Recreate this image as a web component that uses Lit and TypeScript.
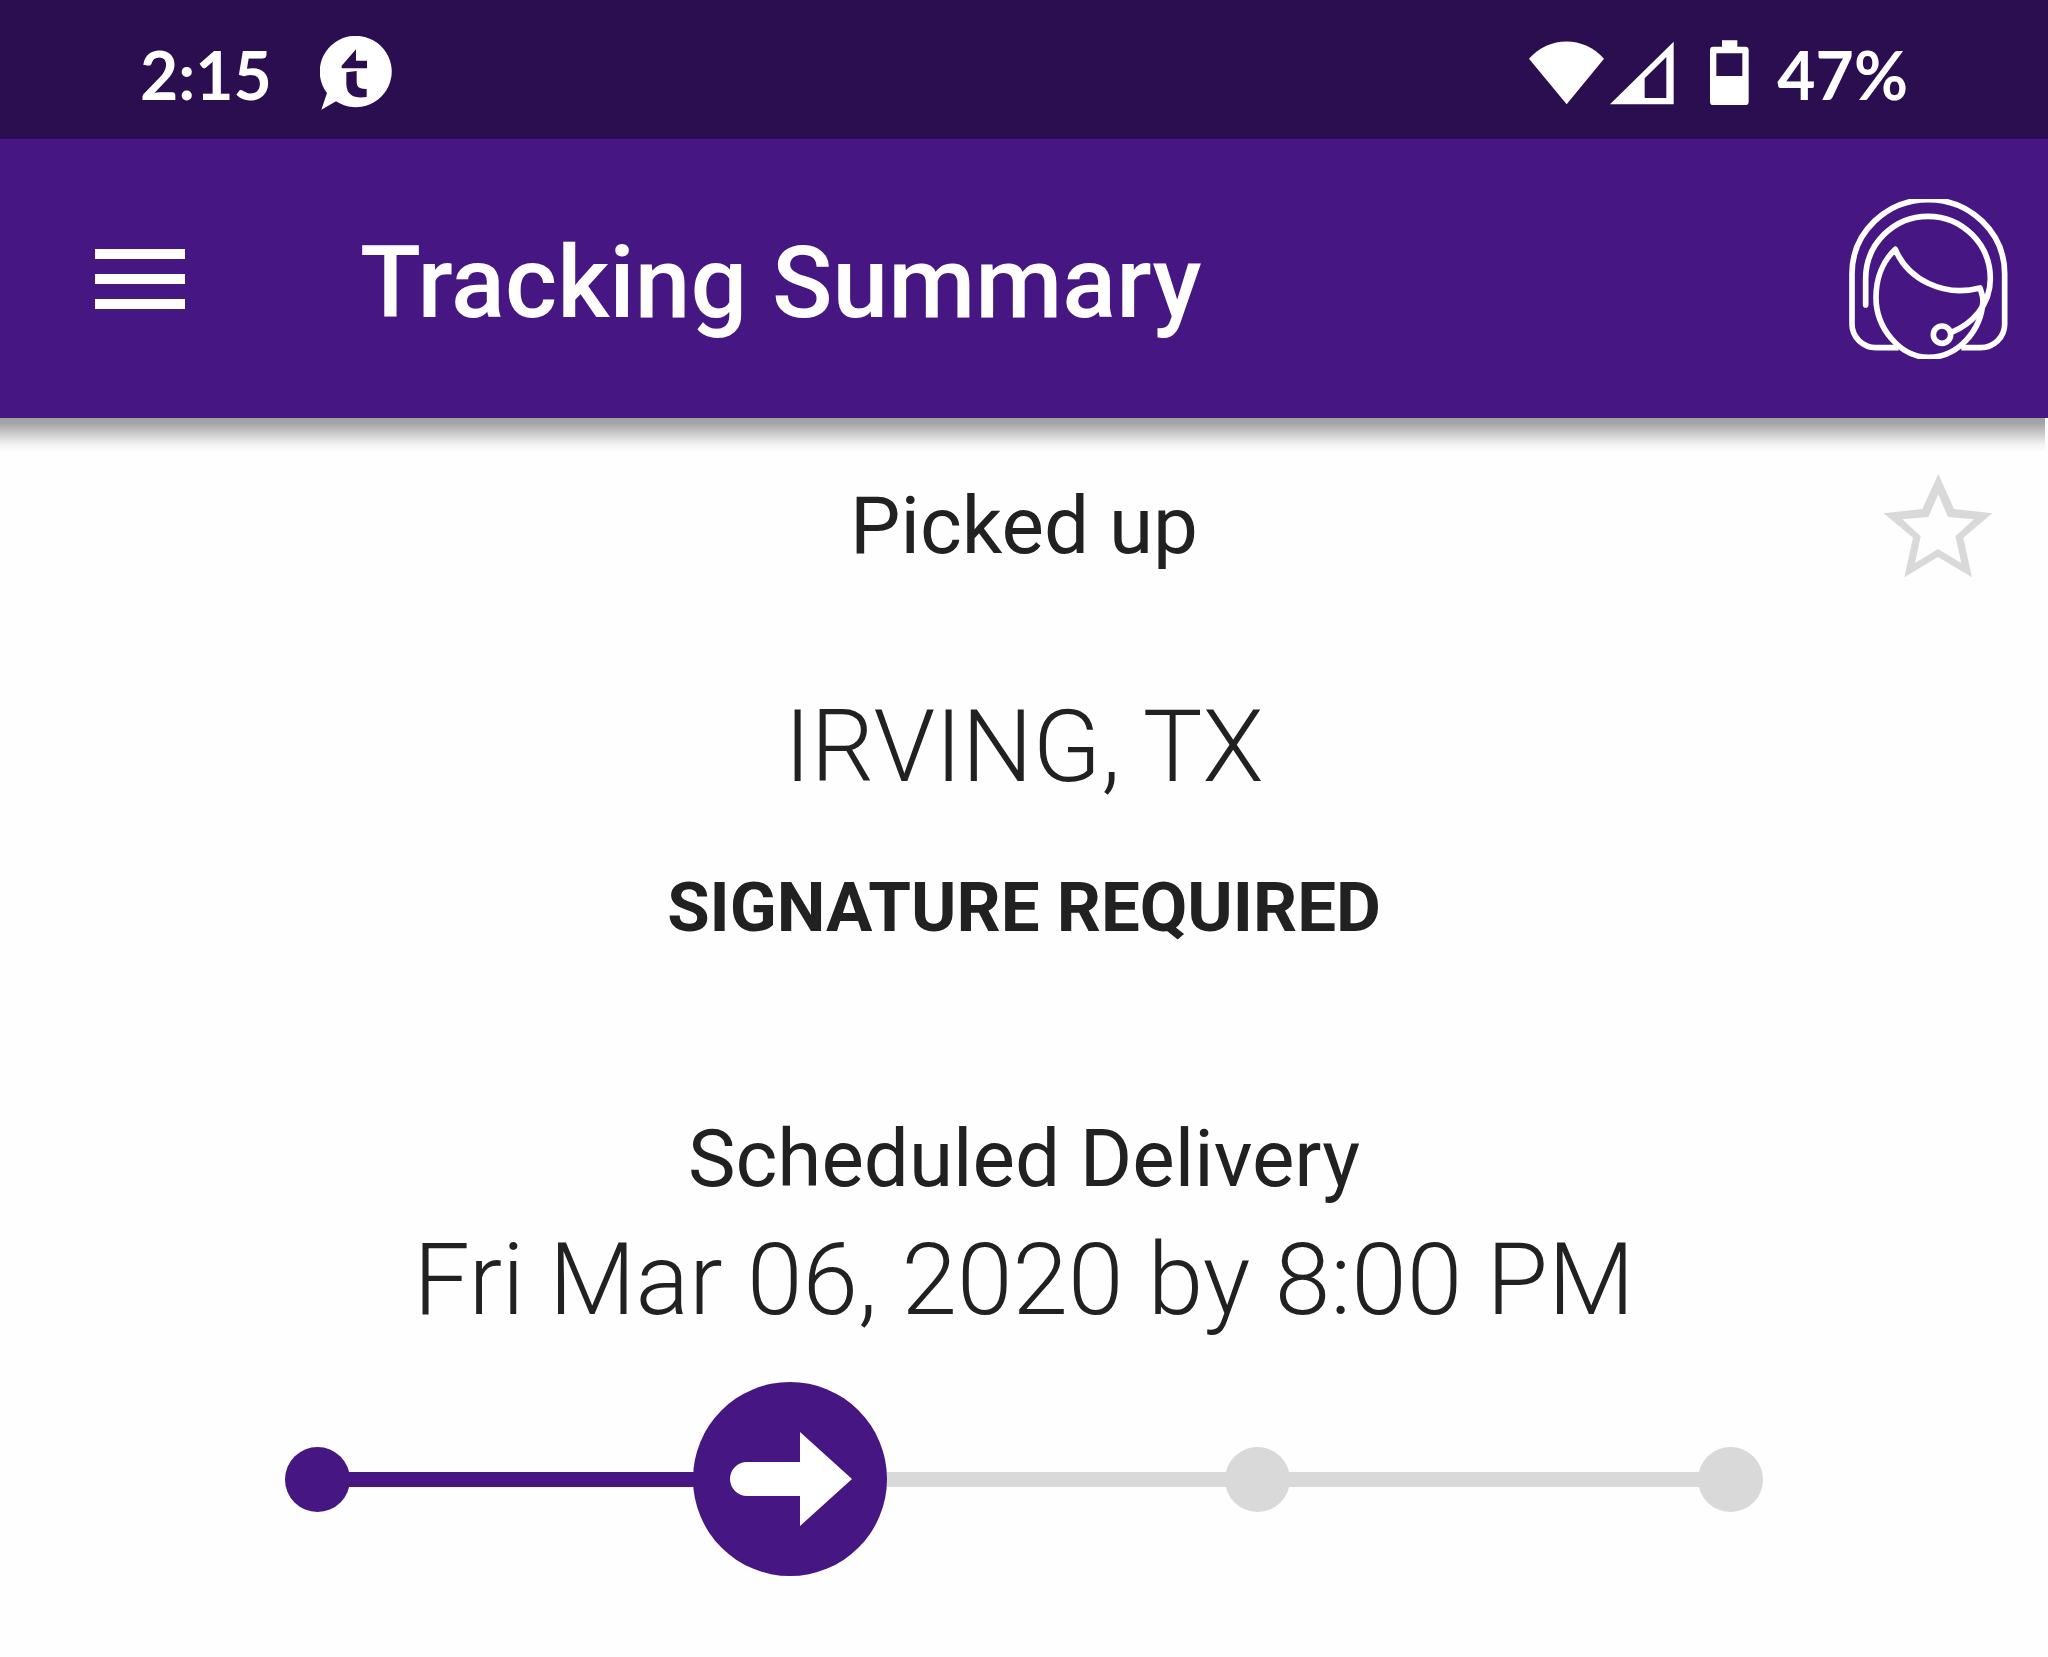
import { LitElement, html, css, svg } from "lit";
import { customElement, property } from "lit/decorators.js";

@customElement("status-bar")
class StatusBar extends LitElement {
  static styles = css`
    :host {
      display: flex;
      align-items: center;
      justify-content: space-between;
      box-sizing: border-box;
      height: 139px;
      padding: 6px 140px 0 140px;
      background: #2b0e4f;
      color: #fff;
      font: 700 66px/80px Lato, "Open Sans", sans-serif;
    }
    svg {
      display: block;
      fill: #fff;
    }
    .group {
      display: flex;
      align-items: center;
    }
    .left {
      gap: 48px;
    }
    .battery {
      margin: 0 28px 0 36px;
    }
    .signal {
      margin-left: 6px;
    }
    .text {
      padding-top: 4px;
    }
  `;

  render() {
    return html`
      <div class="group left">
        <span class="text">2:15</span>
        <svg width="72" height="74" viewBox="657 107 216 222" aria-hidden="true">
          <path
            fill-rule="evenodd"
            d="M705 303 L661 328 L678 278 A108 107 0 1 1 705 303 Z
               M765 147 L722 196 V204 H798 V181 H765 Z
               M736 216 L767 212 V245 Q767 264 785 265 L797 266 V290 Q765 294 752 285 Q736 274 736 250 Z"
          />
        </svg>
      </div>
      <div class="group">
        <svg width="75" height="64" viewBox="92 120 225 192" aria-hidden="true">
          <path d="M92 173 C152 104 257 104 317 173 L205 310 Z" />
        </svg>
        <svg class="signal" width="64" height="64" viewBox="335 120 192 192" aria-hidden="true">
          <path fill-rule="evenodd" d="M335 310 L526 122 V310 Z M439 232 V291 H504 V168 Z" />
        </svg>
        <svg class="battery" width="39" height="66" viewBox="632 120 117 198" aria-hidden="true">
          <path
            fill-rule="evenodd"
            d="M668 121 H714 V140 H738 Q748 140 748 150 V305 Q748 315 738 315 H642 Q632 315 632 305 V150 Q632 140 642 140 H668 Z
               M651 160 V228 H729 V160 Z"
          />
        </svg>
        <span class="text">47%</span>
      </div>
    `;
  }
}

@customElement("app-bar")
class AppBar extends LitElement {
  @property() heading = "";

  static styles = css`
    :host {
      position: relative;
      display: flex;
      align-items: center;
      box-sizing: border-box;
      height: 279px;
      padding: 0 40px 0 80px;
      background: #461682;
      color: #fff;
      text-align: left;
    }
    :host::after {
      content: "";
      position: absolute;
      top: 100%;
      left: 0;
      right: 3px;
      height: 35px;
      background: linear-gradient(#a0a0a0, #a4a4a4 15%, #d2d2d2 50%, #f4f4f4 78%, #fff);
    }
    button {
      display: block;
      padding: 0;
      border: 0;
      background: none;
      color: inherit;
    }
    svg {
      display: block;
    }
    h1 {
      flex: 1;
      margin: 0 0 0 160px;
      padding-top: 8px;
      font: 500 100px/116px Roboto, sans-serif;
    }
  `;

  render() {
    return html`
      <button aria-label="Menu">
        <svg width="120" height="120" viewBox="0 0 24 24" fill="currentColor">
          <path d="M3 18h18v-2H3v2zm0-5h18v-2H3v2zm0-7v2h18V6H3z" />
        </svg>
      </button>
      <h1>${this.heading}</h1>
      <button aria-label="Support">
        <svg
          width="160"
          height="160"
          viewBox="84 86 480 480"
          fill="none"
          stroke="currentColor"
          stroke-width="17"
          stroke-linejoin="round"
        >
          <path d="M236 532 H168 C128 532 96 500 96 462 V310 C96 186 200 88 325 88 C450 88 554 186 554 310 V462 C554 500 522 532 482 532 H424" />
          <path
            stroke-linecap="round"
            d="M137 404 V325 A187 187 0 0 1 511 325 C511 405 455 462 394 486"
          />
          <circle cx="366" cy="493" r="26" />
          <path d="M226 237 C262 325 368 382 480 353 C484 365 489 375 489 392 C484 480 415 561 326 561 C238 561 168 470 168 382 C168 322 190 270 226 237 Z" />
        </svg>
      </button>
    `;
  }
}

type Step = { state: "done" | "current" | "pending"; span: number };

@customElement("progress-track")
class ProgressTrack extends LitElement {
  // span is the relative length of the line that leads to the step
  private steps: Step[] = [
    { state: "done", span: 0 },
    { state: "current", span: 344 },
    { state: "pending", span: 338 },
    { state: "pending", span: 408 },
  ];

  static styles = css`
    :host {
      display: block;
    }
    .track {
      display: flex;
      align-items: center;
      margin: 0;
      padding: 0;
      list-style: none;
    }
    .step {
      display: flex;
      align-items: center;
      color: #d9d9d9;
    }
    .done,
    .current {
      color: #461682;
    }
    .line {
      flex: 1;
      height: 15px;
      margin: 0 -2px;
      background: currentColor;
    }
    .dot {
      position: relative;
      z-index: 1;
      width: 65px;
      height: 65px;
      border-radius: 50%;
      background: currentColor;
    }
    .current .dot {
      width: 194px;
      height: 194px;
    }
    svg {
      display: block;
      fill: #fff;
    }
  `;

  render() {
    return html`
      <ol class="track">
        ${this.steps.map(
          (s) => html`
            <li class="step ${s.state}" style="flex: ${s.span} 0 auto">
              ${s.span ? html`<span class="line"></span>` : ""}
              <span class="dot">
                ${s.state === "current"
                  ? html`<svg width="194" height="194" viewBox="0 0 194 194" aria-hidden="true">
                      ${svg`<path d="M54 80 H107 V50 L159 97 L107 144 V114 H54 A17 17 0 0 1 54 80 Z" />`}
                    </svg>`
                  : ""}
              </span>
            </li>
          `
        )}
      </ol>
    `;
  }
}

@customElement("app-root")
class AppRoot extends LitElement {
  static styles = css`
    :host {
      display: block;
      min-height: 100vh;
      background: #fefefe;
      color: #212121;
      font-family: Roboto, sans-serif;
      text-align: center;
    }
    .summary {
      padding: 55px 55px 80px;
    }
    .top {
      display: grid;
      grid-template-columns: 1fr auto 1fr;
      align-items: center;
    }
    h2,
    p {
      margin: 0;
    }
    .label {
      grid-column: 2;
      font: 400 80px/96px Roboto, sans-serif;
    }
    .value {
      font: 300 100px/116px Roboto, sans-serif;
    }
    .place {
      margin-top: 110px;
    }
    .notice {
      margin-top: 62px;
      font: 700 69px/82px Roboto, sans-serif;
    }
    .delivery {
      margin-top: 162px;
    }
    .date {
      margin-top: 15px;
    }
    .star {
      justify-self: end;
      padding: 0;
      border: 0;
      background: none;
    }
    .star svg {
      display: block;
      fill: #d9d9d9;
    }
    .progress {
      margin: 44px 230px 0;
    }
  `;

  render() {
    return html`
      <status-bar></status-bar>
      <app-bar heading="Tracking Summary"></app-bar>
      <main class="summary">
        <div class="top">
          <h2 class="label">Picked up</h2>
          <button class="star" aria-label="Add to favorites">
            <svg width="110" height="106" viewBox="130 218 330 318">
              <path
                fill-rule="evenodd"
                d="M296 221 L343 326 L458 339 L371 412 L397 531 L295 470 L194 531 L220 412 L132 339 L248 326 Z
                   M296 282 L266 350 L188 357 L243 408 L226 488 L295 446 L365 488 L347 408 L403 357 L325 350 Z"
              />
            </svg>
          </button>
        </div>
        <p class="value place">IRVING, TX</p>
        <p class="notice">SIGNATURE REQUIRED</p>
        <h2 class="label delivery">Scheduled Delivery</h2>
        <p class="value date">Fri Mar 06, 2020 by 8:00 PM</p>
        <progress-track class="progress"></progress-track>
      </main>
    `;
  }
}
